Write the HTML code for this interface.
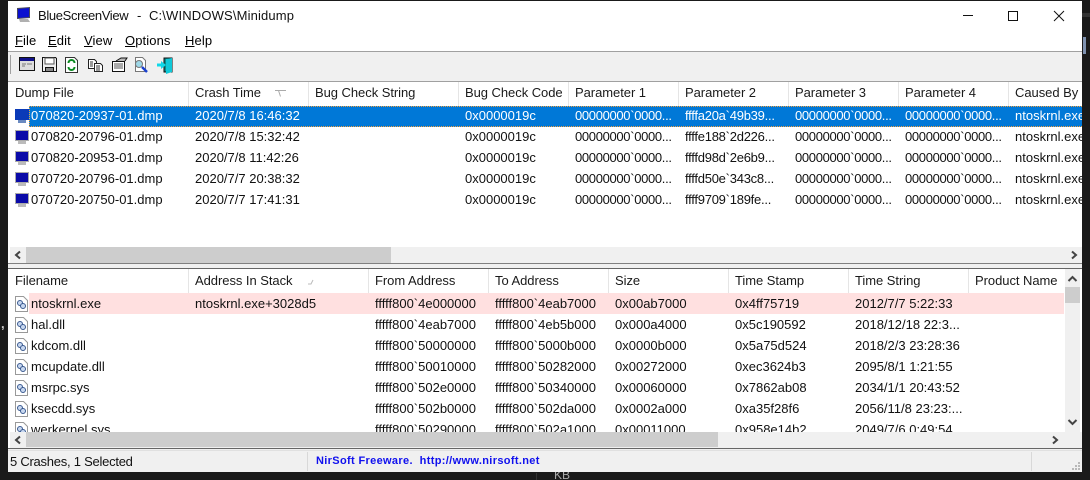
<!DOCTYPE html>
<html><head><meta charset="utf-8"><title>BlueScreenView</title>
<style>
html,body{margin:0;padding:0;background:#1a1a1a;overflow:hidden}
body{width:1090px;height:480px;position:relative;overflow:hidden;font:13px/16px "Liberation Sans",sans-serif;color:#000}
div,span,svg{position:absolute;display:block}
#w{left:8px;top:1px;width:1074px;height:471px;background:#fff;overflow:hidden}
.t{white-space:nowrap}
.h{color:#1a1a1a;top:0;letter-spacing:-.05px}
.sep{width:1px;background:#e5e5e5;top:0;height:24px}
.r{left:0;height:21px;width:1074px}
.r span{top:2px;white-space:nowrap;color:#111}
.u span{top:3px}
.a{left:7px}.b{left:23px}.c{left:187px}.d{left:307px}.e{left:457px}.f{left:567px;letter-spacing:-.33px}.g{left:677px;letter-spacing:-.25px}.i{left:787px;letter-spacing:-.33px}.j{left:897px;letter-spacing:-.33px}.k{left:1007px}
.l{left:367px}.m{left:487px}.n{left:607px}.o{left:727px}.q{left:847px}.s{left:967px}
.sb{background:#f0f0f0}.th{background:#cdcdcd}
svg{overflow:visible}
.w{color:#fff!important}
</style></head><body>
<span class="t" style="left:554px;top:467px;color:#aaa;font-size:12px">KB</span>
<div style="left:536px;top:473px;width:1px;height:7px;background:#333"></div>
<div style="left:1083px;top:37px;width:3px;height:17px;background:#7f92b0"></div>
<div style="left:1082px;top:13px;width:8px;height:4px;background:#333"></div>
<span class="t" style="left:1px;top:316px;color:#ccc;font-weight:bold">,</span>
<div id="w">
<!-- title -->
<svg style="left:8px;top:6px" width="16" height="16" viewBox="0 0 16 16"><path d="M1 1l13-1v11l-13 1z" fill="#4a4a5a"/><path d="M2 2l11-1v9l-11 1z" fill="#0a10d0"/><path d="M3 12h9l2 3H4z" fill="#b0b0b0"/></svg>
<span class="t" style="left:30px;top:7px;letter-spacing:-.35px;color:#111">BlueScreenView</span>
<span class="t" style="left:129px;top:7px;color:#111">-</span>
<span class="t" style="left:141px;top:7px;letter-spacing:.15px;color:#111">C:\WINDOWS\Minidump</span>
<svg style="left:960px;top:9px" width="100" height="14" viewBox="0 0 100 14" fill="none" stroke="#111"><path d="M-5 5.500H5"/><rect x="40.500" y="1.500" width="9" height="9"/><path d="M86 1l10 10M96 1L86 11"/></svg>
<!-- menu -->
<span class="t" style="left:7px;top:32px;letter-spacing:.1px"><u>F</u>ile</span>
<span class="t" style="left:40px;top:32px;letter-spacing:.1px"><u>E</u>dit</span>
<span class="t" style="left:76px;top:32px;letter-spacing:.1px"><u>V</u>iew</span>
<span class="t" style="left:117px;top:32px;letter-spacing:.1px"><u>O</u>ptions</span>
<span class="t" style="left:177px;top:32px;letter-spacing:.1px"><u>H</u>elp</span>
<div style="left:0;top:50px;width:1074px;height:1px;background:#a0a0a0"></div>
<div style="left:0;top:51px;width:1074px;height:29px;background:#f0f0f0"></div>
<div style="left:2px;top:54px;width:1px;height:19px;background:#a0a0a0"></div>
<!-- toolbar -->
<svg style="left:11px;top:55px" width="160" height="18" viewBox="0 0 160 18" fill="none">
<rect x="0.500" y="1.500" width="15" height="13" fill="#ddd" stroke="#111"/><rect x="1" y="2" width="14" height="3" fill="#10108a"/><path d="M3 8h4M8 8h5M3 10h3" stroke="#777"/>
<path d="M23.500 1.500h13l1 1v13h-14z" fill="#eee" stroke="#111"/><rect x="26" y="2" width="9" height="6" fill="#fff" stroke="#555"/><rect x="26.500" y="11.500" width="8" height="4" fill="#888" stroke="#111"/>
<path d="M46.500 1.500h9l3 3v12h-12z" fill="#fff" stroke="#333"/><path d="M49.500 7a3 3 0 0 1 6 0M55.500 11a3 3 0 0 1-6 0" stroke="#0a8a20" stroke-width="2"/>
<path d="M69.500 3.500h6l2 2v7h-8z" fill="#fff" stroke="#222"/><path d="M75.500 7.500h6l2 2v6h-8z" fill="#fff" stroke="#222"/><path d="M71 6h3M71 8h3M71 10h3M77 10h4M77 12h4M77 14h4" stroke="#333"/>
<path d="M93.500 5.500h12v10h-12z" fill="#fff" stroke="#111"/><path d="M95 8h9M95 10h9M95 12h9" stroke="#555"/><path d="M97 5l5-3h6l-2 3" fill="#bbb" stroke="#111"/>
<path d="M116.500 1.500h7l3 3v11h-10z" fill="#fff" stroke="#777"/><circle cx="120" cy="8" r="3.500" fill="#9fd8e8" stroke="#777"/><path d="M123 11l5 5" stroke="#1a40d0" stroke-width="2.500"/>
<path d="M145 2h8v14h-8z" fill="#0a8a8a" stroke="#111"/><path d="M138 9h5" stroke="#10d8e8" stroke-width="3"/><path d="M142 5v8l5-4z" fill="#10d8e8"/><path d="M147 3l6-1v14l-6 2z" fill="#10c8d8"/>
</svg>
<div style="left:0;top:80px;width:1074px;height:1px;background:#a0a0a0"></div>
<!-- upper list -->
<div style="left:0;top:81px;width:1074px;height:24px;overflow:hidden">
<span class="t h" style="left:7px;top:3px">Dump File</span>
<span class="t h" style="left:187px;top:3px">Crash Time</span>
<svg style="left:267px;top:8px" width="11" height="8"><path d="M0 .5h11M3.500 .5l2 6" stroke="#aaa" fill="none"/></svg>
<span class="t h" style="left:307px;top:3px">Bug Check String</span>
<span class="t h" style="left:457px;top:3px">Bug Check Code</span>
<span class="t h" style="left:567px;top:3px">Parameter 1</span>
<span class="t h" style="left:677px;top:3px">Parameter 2</span>
<span class="t h" style="left:787px;top:3px">Parameter 3</span>
<span class="t h" style="left:897px;top:3px">Parameter 4</span>
<span class="t h" style="left:1007px;top:3px">Caused By</span>
<div class="sep" style="left:180px"></div><div class="sep" style="left:300px"></div><div class="sep" style="left:450px"></div><div class="sep" style="left:560px"></div><div class="sep" style="left:670px"></div><div class="sep" style="left:780px"></div><div class="sep" style="left:890px"></div><div class="sep" style="left:1000px"></div>
</div>

<div class="r" style="top:105px;overflow:hidden">
<div style="left:21px;top:0;width:1055px;height:19px;background:#0078d7;border:1px dotted #f0a040;box-sizing:content-box"></div>
<svg style="left:7px;top:3px" width="15" height="15"><rect x="0" y="0" width="14" height="11" fill="#0a3ab8"/><rect x="3" y="11" width="8" height="3" fill="#6a8ac0"/></svg>
<span class="b w">070820-20937-01.dmp</span><span class="c w">2020/7/8 16:46:32</span><span class="e w">0x0000019c</span><span class="f w">00000000`0000...</span><span class="g w">ffffa20a`49b39...</span><span class="i w">00000000`0000...</span><span class="j w">00000000`0000...</span><span class="k w">ntoskrnl.exe</span></div>

<div class="r" style="top:126px;overflow:hidden"><svg style="left:7px;top:3px" width="15" height="15"><rect x=".5" y=".5" width="13" height="10" fill="#0a0aa8" stroke="#aaa"/><rect x="3" y="11" width="8" height="3" fill="#bbb"/></svg>
<span class="b">070820-20796-01.dmp</span><span class="c">2020/7/8 15:32:42</span><span class="e">0x0000019c</span><span class="f">00000000`0000...</span><span class="g">ffffe188`2d226...</span><span class="i">00000000`0000...</span><span class="j">00000000`0000...</span><span class="k">ntoskrnl.exe</span></div>

<div class="r" style="top:147px;overflow:hidden"><svg style="left:7px;top:3px" width="15" height="15"><rect x=".5" y=".5" width="13" height="10" fill="#0a0aa8" stroke="#aaa"/><rect x="3" y="11" width="8" height="3" fill="#bbb"/></svg>
<span class="b">070820-20953-01.dmp</span><span class="c">2020/7/8 11:42:26</span><span class="e">0x0000019c</span><span class="f">00000000`0000...</span><span class="g">ffffd98d`2e6b9...</span><span class="i">00000000`0000...</span><span class="j">00000000`0000...</span><span class="k">ntoskrnl.exe</span></div>

<div class="r" style="top:168px;overflow:hidden"><svg style="left:7px;top:3px" width="15" height="15"><rect x=".5" y=".5" width="13" height="10" fill="#0a0aa8" stroke="#aaa"/><rect x="3" y="11" width="8" height="3" fill="#bbb"/></svg>
<span class="b">070720-20796-01.dmp</span><span class="c">2020/7/7 20:38:32</span><span class="e">0x0000019c</span><span class="f">00000000`0000...</span><span class="g">ffffd50e`343c8...</span><span class="i">00000000`0000...</span><span class="j">00000000`0000...</span><span class="k">ntoskrnl.exe</span></div>

<div class="r" style="top:189px;overflow:hidden"><svg style="left:7px;top:3px" width="15" height="15"><rect x=".5" y=".5" width="13" height="10" fill="#0a0aa8" stroke="#aaa"/><rect x="3" y="11" width="8" height="3" fill="#bbb"/></svg>
<span class="b">070720-20750-01.dmp</span><span class="c">2020/7/7 17:41:31</span><span class="e">0x0000019c</span><span class="f">00000000`0000...</span><span class="g">ffff9709`189fe...</span><span class="i">00000000`0000...</span><span class="j">00000000`0000...</span><span class="k">ntoskrnl.exe</span></div>

<!-- upper scrollbar -->
<div class="sb" style="left:2px;top:246px;width:1072px;height:16px"></div>
<div class="th" style="left:18px;top:246px;width:365px;height:16px"></div>
<svg style="left:6px;top:250px" width="1066" height="8" fill="none" stroke="#444" stroke-width="2"><path d="M6 0.500L2 4l4 3.500M1058 .5l4 3.500-4 3.500"/></svg>

<div style="left:0;top:262px;width:1074px;height:1px;background:#808080"></div>
<div style="left:0;top:263px;width:1074px;height:4px;background:#f0f0f0"></div>
<div style="left:0;top:267px;width:1074px;height:1px;background:#666"></div>

<!-- lower list -->
<div style="left:0;top:268px;width:1074px;height:24px;overflow:hidden">
<span class="t h" style="left:7px;top:4px">Filename</span>
<span class="t h" style="left:187px;top:4px">Address In Stack</span>
<svg style="left:299px;top:9px" width="8" height="8"><path d="M1 6h3l2-4" stroke="#bbb" fill="none"/></svg>
<span class="t h" style="left:367px;top:4px">From Address</span>
<span class="t h" style="left:487px;top:4px">To Address</span>
<span class="t h" style="left:607px;top:4px">Size</span>
<span class="t h" style="left:727px;top:4px">Time Stamp</span>
<span class="t h" style="left:847px;top:4px">Time String</span>
<span class="t h" style="left:967px;top:4px">Product Name</span>
<div class="sep" style="left:180px"></div><div class="sep" style="left:360px"></div><div class="sep" style="left:480px"></div><div class="sep" style="left:600px"></div><div class="sep" style="left:720px"></div><div class="sep" style="left:840px"></div><div class="sep" style="left:960px"></div>
</div>

<div style="left:0;top:292px;width:1057px;height:139px;overflow:hidden">
<div style="left:21px;top:0;width:1035px;height:21px;background:#ffe0e0"></div>

<div class="r u" style="top:0"><svg style="left:7px;top:3px" width="13" height="16"><path d="M.5.5h8l4 4v11H.5z" fill="#fff" stroke="#999"/><circle cx="5" cy="7" r="2.500" fill="#c8d8f0" stroke="#3a5a90"/><circle cx="8" cy="10" r="2.500" fill="#c8d8f0" stroke="#3a5a90"/></svg>
<span class="b">ntoskrnl.exe</span><span class="c">ntoskrnl.exe+3028d5</span><span class="l">fffff800`4e000000</span><span class="m">fffff800`4eab7000</span><span class="n">0x00ab7000</span><span class="o">0x4ff75719</span><span class="q">2012/7/7 5:22:33</span></div>

<div class="r u" style="top:21px"><svg style="left:7px;top:3px" width="13" height="16"><path d="M.5.5h8l4 4v11H.5z" fill="#fff" stroke="#999"/><circle cx="5" cy="7" r="2.500" fill="#c8d8f0" stroke="#3a5a90"/><circle cx="8" cy="10" r="2.500" fill="#c8d8f0" stroke="#3a5a90"/></svg>
<span class="b">hal.dll</span><span class="l">fffff800`4eab7000</span><span class="m">fffff800`4eb5b000</span><span class="n">0x000a4000</span><span class="o">0x5c190592</span><span class="q">2018/12/18 22:3...</span></div>

<div class="r u" style="top:42px"><svg style="left:7px;top:3px" width="13" height="16"><path d="M.5.5h8l4 4v11H.5z" fill="#fff" stroke="#999"/><circle cx="5" cy="7" r="2.500" fill="#c8d8f0" stroke="#3a5a90"/><circle cx="8" cy="10" r="2.500" fill="#c8d8f0" stroke="#3a5a90"/></svg>
<span class="b">kdcom.dll</span><span class="l">fffff800`50000000</span><span class="m">fffff800`5000b000</span><span class="n">0x0000b000</span><span class="o">0x5a75d524</span><span class="q">2018/2/3 23:28:36</span></div>

<div class="r u" style="top:63px"><svg style="left:7px;top:3px" width="13" height="16"><path d="M.5.5h8l4 4v11H.5z" fill="#fff" stroke="#999"/><circle cx="5" cy="7" r="2.500" fill="#c8d8f0" stroke="#3a5a90"/><circle cx="8" cy="10" r="2.500" fill="#c8d8f0" stroke="#3a5a90"/></svg>
<span class="b">mcupdate.dll</span><span class="l">fffff800`50010000</span><span class="m">fffff800`50282000</span><span class="n">0x00272000</span><span class="o">0xec3624b3</span><span class="q">2095/8/1 1:21:55</span></div>

<div class="r u" style="top:84px"><svg style="left:7px;top:3px" width="13" height="16"><path d="M.5.5h8l4 4v11H.5z" fill="#fff" stroke="#999"/><circle cx="5" cy="7" r="2.500" fill="#c8d8f0" stroke="#3a5a90"/><circle cx="8" cy="10" r="2.500" fill="#c8d8f0" stroke="#3a5a90"/></svg>
<span class="b">msrpc.sys</span><span class="l">fffff800`502e0000</span><span class="m">fffff800`50340000</span><span class="n">0x00060000</span><span class="o">0x7862ab08</span><span class="q">2034/1/1 20:43:52</span></div>

<div class="r u" style="top:105px"><svg style="left:7px;top:3px" width="13" height="16"><path d="M.5.5h8l4 4v11H.5z" fill="#fff" stroke="#999"/><circle cx="5" cy="7" r="2.500" fill="#c8d8f0" stroke="#3a5a90"/><circle cx="8" cy="10" r="2.500" fill="#c8d8f0" stroke="#3a5a90"/></svg>
<span class="b">ksecdd.sys</span><span class="l">fffff800`502b0000</span><span class="m">fffff800`502da000</span><span class="n">0x0002a000</span><span class="o">0xa35f28f6</span><span class="q">2056/11/8 23:23:...</span></div>

<div class="r u" style="top:126px"><svg style="left:7px;top:3px" width="13" height="16"><path d="M.5.5h8l4 4v11H.5z" fill="#fff" stroke="#999"/><circle cx="5" cy="7" r="2.500" fill="#c8d8f0" stroke="#3a5a90"/><circle cx="8" cy="10" r="2.500" fill="#c8d8f0" stroke="#3a5a90"/></svg>
<span class="b">werkernel.sys</span><span class="l">fffff800`50290000</span><span class="m">fffff800`502a1000</span><span class="n">0x00011000</span><span class="o">0x958e14b2</span><span class="q">2049/7/6 0:49:54</span></div>
</div>

<!-- vertical scrollbar -->
<div class="sb" style="left:1057px;top:268px;width:15px;height:163px"></div>
<div class="th" style="left:1057px;top:286px;width:15px;height:16px"></div>
<svg style="left:1059px;top:275px" width="11" height="150" fill="none" stroke="#444" stroke-width="2"><path d="M1.500 5l4-4 4 4M1.500 144l4 4 4-4"/></svg>

<!-- lower scrollbar -->
<div class="sb" style="left:2px;top:431px;width:1072px;height:16px"></div>
<div class="th" style="left:18px;top:431px;width:692px;height:15px"></div>
<svg style="left:6px;top:435px" width="1066" height="8" fill="none" stroke="#444" stroke-width="2"><path d="M6 0.500L2 4l4 3.500M1039 .5l4 3.500-4 3.500"/></svg>

<div style="left:0;top:447px;width:1074px;height:1px;background:#666"></div>
<!-- status -->
<div style="left:0;top:448px;width:1074px;height:23px;background:#f0f0f0"></div>
<div style="left:0;top:449px;width:1074px;height:1px;background:#e0e0e0"></div>
<span class="t" style="left:2px;top:453px;letter-spacing:-.25px;color:#111">5 Crashes, 1 Selected</span>
<div style="left:299px;top:451px;width:1px;height:19px;background:#d8d8d8"></div>
<span class="t" style="left:308px;top:452px;font-size:11px;font-weight:bold;color:#1010ee;letter-spacing:.34px">NirSoft Freeware. &nbsp;http://www.nirsoft.net</span>
<div style="left:1023px;top:451px;width:1px;height:19px;background:#d8d8d8"></div>
<svg style="left:1064px;top:461px" width="8" height="8" fill="#b8b8b8"><rect x="6" y="0" width="2" height="2"/><rect x="3" y="3" width="2" height="2"/><rect x="6" y="3" width="2" height="2"/><rect x="0" y="6" width="2" height="2"/><rect x="3" y="6" width="2" height="2"/><rect x="6" y="6" width="2" height="2"/></svg>
</div>
</body></html>
